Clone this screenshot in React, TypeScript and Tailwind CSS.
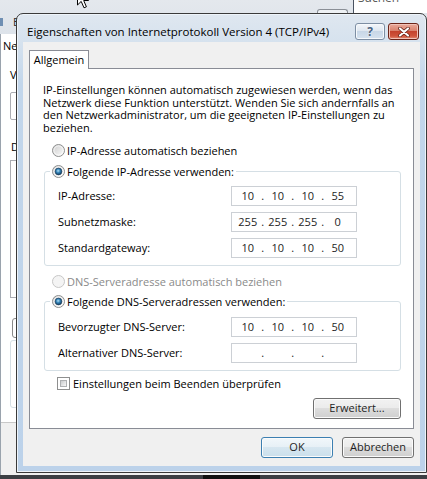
import React, { useId } from "react";

const ui = "font-['Open_Sans','Noto_Sans',sans-serif]";

function Radio({ checked, disabled }: { checked?: boolean; disabled?: boolean }) {
  const id = useId().replace(/:/g, "");
  return (
    <svg width="13" height="13" viewBox="0 0 13 13" className="shrink-0">
      <defs>
        <linearGradient id={`f${id}`} x1="0" y1="0" x2="1" y2="1">
          <stop offset="0" stopColor="#cbcbcb" />
          <stop offset="1" stopColor="#fdfdfd" />
        </linearGradient>
        <radialGradient id={`d${id}`} cx="0.45" cy="0.4" r="0.65">
          <stop offset="0" stopColor="#b4e2f8" />
          <stop offset="0.45" stopColor="#2f7fb4" />
          <stop offset="1" stopColor="#10304e" />
        </radialGradient>
      </defs>
      <circle
        cx="6.5"
        cy="6.5"
        r="6"
        fill={disabled ? "#f4f4f4" : `url(#f${id})`}
        stroke={disabled ? "#c6c6c6" : "#8e8f8f"}
      />
      {!disabled && <circle cx="6.5" cy="6.5" r="4.6" fill="none" stroke="#ffffff" strokeOpacity="0.7" />}
      {checked && <circle cx="6.5" cy="6.5" r="3.4" fill={`url(#d${id})`} stroke="#1a3c5b" strokeWidth="0.6" />}
    </svg>
  );
}

function Checkbox() {
  return (
    <span className="flex h-[13px] w-[13px] shrink-0 border border-[#8e8f8f] bg-white p-[2px]">
      <span className="block h-full w-full border border-[#aeb0b2] bg-[linear-gradient(135deg,#c9cbcd,#f7f7f7)]" />
    </span>
  );
}

function IpField({ parts }: { parts: string[] }) {
  return (
    <div className="flex h-5 w-[126px] items-center border border-[#ccd0d5] bg-white pl-[4px] text-[#1e1e1e]">
      {parts.map((p, i) => (
        <React.Fragment key={i}>
          {i > 0 && <span className="w-[6.5px] text-center">.</span>}
          <span className="w-[23.5px] text-center">{p}</span>
        </React.Fragment>
      ))}
    </div>
  );
}

function Button({ children, primary, width }: { children: React.ReactNode; primary?: boolean; width: string }) {
  return (
    <div
      className={`flex h-[21px] items-center justify-center rounded-[3px] border text-[#1e1e1e] shadow-[inset_0_0_0_1px_#fbfbfb] ${width} ${
        primary
          ? "border-[#3c7fb1] bg-[linear-gradient(#f1f7fb_0%,#e6f0f6_50%,#d6e6f0_50%,#cadfeb_100%)]"
          : "border-[#707070] bg-[linear-gradient(#f2f2f2_0%,#ebebeb_50%,#dddddd_50%,#cfcfcf_100%)]"
      }`}
    >
      {children}
    </div>
  );
}

function Row({ label, parts }: { label: string; parts: string[] }) {
  return (
    <div className="flex h-5 items-center">
      <span className="w-[173px]">{label}</span>
      <IpField parts={parts} />
    </div>
  );
}

export default function App() {
  return (
    <div className={`relative h-[479px] w-[427px] overflow-hidden bg-white text-[11px] text-black ${ui}`}>
      {/* network connection window underneath, only its left strip shows */}
      <div className="flex h-full flex-col">
        <div className="flex h-[34px] flex-col bg-[linear-gradient(#e4e8ed,#dde3ea)]">
          <div className="flex h-[13px] items-end">
            <div className="ml-[317px] h-[4px] w-[31px] rounded-t-[3px] border border-b-0 border-[#8a8f96] bg-[#eef1f4]" />
            <div className="ml-[5px] flex h-full flex-1 items-start overflow-hidden border-l border-[#4a5361] bg-white pl-[4px]">
              <span className="-mt-[9px] text-[12px] leading-[14px] text-[#5b5b5b]">Suchen</span>
            </div>
          </div>
          <div className="flex items-center gap-[10px] pt-[1px]">
            <span className="h-[8px] w-[3px] bg-[#6f8fb3]" />
            <span className="text-[#2b2b2b]">E</span>
          </div>
        </div>
        <div className="flex flex-1 flex-col border-l border-[#9aa3ad]">
          <div className="mt-[4px] ml-[2px]">Ne</div>
          <div className="mt-[12px] ml-[9px]">V</div>
          <div className="mt-[9px] ml-[9px] h-[28px] w-[300px] rounded-[2px] border border-[#abadb3]" />
          <div className="mt-[19px] ml-[10px]">D</div>
          <div className="mt-[4px] ml-[9px] h-[138px] w-[300px] border border-[#abadb3]" />
          <div className="mt-[20px] ml-[11px] h-[20px] w-[80px] rounded-[3px] border border-[#8a8a8a]" />
          <div className="mt-[2px] ml-[9px] h-[68px] w-[300px] rounded-[3px] border border-[#d5dfe5]" />
          <div className="mt-[14px] flex-1 border-t border-[#c8c8c8] bg-[#f0f0f0]" />
        </div>
        <div className="flex h-[4px] bg-[#3c3f44]">
          <span className="ml-[203px] w-[57px] bg-[#111]" />
        </div>
      </div>

      {/* mouse pointer */}
      <svg className="absolute left-[77px] top-[-11px]" width="13" height="20" viewBox="0 0 13 20">
        <path d="M0.5 0.5 L0.5 16 L4.2 12.4 L7 18.8 L9.4 17.8 L6.7 11.5 L11.5 11.5 Z" fill="#fff" stroke="#000" strokeWidth="1" />
      </svg>

      {/* dialog */}
      <div className="absolute left-[16px] top-[13px] flex h-[460px] w-[411px] flex-col rounded-t-[7px] border border-[#3a3a3a] bg-[linear-gradient(180deg,#dfe7f0_0px,#d6e2ee_28px,#c2d6eb_70px,#bcd2ea_100%)] shadow-[inset_0_0_0_1px_#eef4fa]">
        <div className="flex h-[28px] items-center pt-[7px] pl-[10px] pr-[7px]">
          <span className="min-w-0 flex-1 whitespace-nowrap text-[11.5px] text-black">
            Eigenschaften von Internetprotokoll Version 4 (TCP/IPv4)
          </span>
          <div className="flex h-[17px] w-[30px] shrink-0 items-center justify-center rounded-[3px] border border-[#7d8ea3] bg-[linear-gradient(#f3f6fa_0%,#dfe7f0_45%,#c8d7e7_50%,#d6e2ef_100%)] shadow-[inset_0_0_0_1px_#f6f9fc]">
            <span className="text-[12px] font-bold leading-none text-[#4a6281] [text-shadow:0_0_2px_#fff]">?</span>
          </div>
          <div className="ml-[3px] flex h-[17px] w-[31px] shrink-0 items-center justify-center rounded-[3px] border border-[#6b2418] bg-[linear-gradient(#eaa99a_0%,#d9826e_45%,#c4432d_50%,#cf543b_80%,#e38e77_100%)] shadow-[inset_0_0_0_1px_#f1c2b7]">
            <svg width="12" height="10" viewBox="0 0 12 10">
              <path d="M2 1.5 L10 8.5 M10 1.5 L2 8.5" stroke="#5a1a10" strokeWidth="3.6" strokeLinecap="round" />
              <path d="M2 1.5 L10 8.5 M10 1.5 L2 8.5" stroke="#fff" strokeWidth="2.2" strokeLinecap="round" />
            </svg>
          </div>
        </div>

        <div className="mx-[6px] mt-auto flex h-[424px] flex-col bg-[#f0f0f0] px-[6px] pt-[8px]">
          <div className="flex">
            <div className="relative z-10 -mb-px flex h-[19px] w-[60px] items-center justify-center border border-b-0 border-[#898c95] bg-white">
              Allgemein
            </div>
          </div>
          <div className="flex h-[361px] flex-col border border-[#898c95] bg-white pl-[13px] pr-[12px] pt-[15px]">
            <p className="whitespace-nowrap leading-[12.7px]">
              IP-Einstellungen können automatisch zugewiesen werden, wenn das
              <br />
              Netzwerk diese Funktion unterstützt. Wenden Sie sich andernfalls an
              <br />
              den Netzwerkadministrator, um die geeigneten IP-Einstellungen zu
              <br />
              beziehen.
            </p>

            <div className="mt-[8px] ml-[9px] flex h-4 items-center gap-[2px]">
              <Radio />
              <span>IP-Adresse automatisch beziehen</span>
            </div>

            <fieldset className="mt-[5px] ml-[1px] w-[357px] rounded-[3px] border border-[#d5dfe5] p-0">
              <legend className="ml-[5px] flex h-4 items-center gap-[2px] px-[2px]">
                <Radio checked />
                <span>Folgende IP-Adresse verwenden:</span>
              </legend>
              <div className="flex flex-col gap-[6px] pt-[6px] pb-[7px] pl-[13px]">
                <Row label="IP-Adresse:" parts={["10", "10", "10", "55"]} />
                <Row label="Subnetzmaske:" parts={["255", "255", "255", "0"]} />
                <Row label="Standardgateway:" parts={["10", "10", "10", "50"]} />
              </div>
            </fieldset>

            <div className="mt-[8px] ml-[9px] flex h-4 items-center gap-[2px] text-[#8a8a8a]">
              <Radio disabled />
              <span>DNS-Serveradresse automatisch beziehen</span>
            </div>

            <fieldset className="mt-[4px] ml-[1px] w-[357px] rounded-[3px] border border-[#d5dfe5] p-0">
              <legend className="ml-[5px] flex h-4 items-center gap-[2px] px-[2px]">
                <Radio checked />
                <span>Folgende DNS-Serveradressen verwenden:</span>
              </legend>
              <div className="flex flex-col gap-[6px] pt-[7px] pb-[7px] pl-[13px]">
                <Row label="Bevorzugter DNS-Server:" parts={["10", "10", "10", "50"]} />
                <Row label="Alternativer DNS-Server:" parts={["", "", "", ""]} />
              </div>
            </fieldset>

            <div className="mt-[5px] ml-[14px] flex h-4 items-center gap-[3px]">
              <Checkbox />
              <span>Einstellungen beim Beenden überprüfen</span>
            </div>

            <div className="mt-[6px] flex justify-end">
              <Button width="w-[88px]">Erweitert...</Button>
            </div>
          </div>

          <div className="mt-[8px] flex justify-end gap-[9px]">
            <Button primary width="w-[72px]">
              OK
            </Button>
            <Button width="w-[72px]">Abbrechen</Button>
          </div>
        </div>
        <div className="h-[6px]" />
      </div>
    </div>
  );
}
